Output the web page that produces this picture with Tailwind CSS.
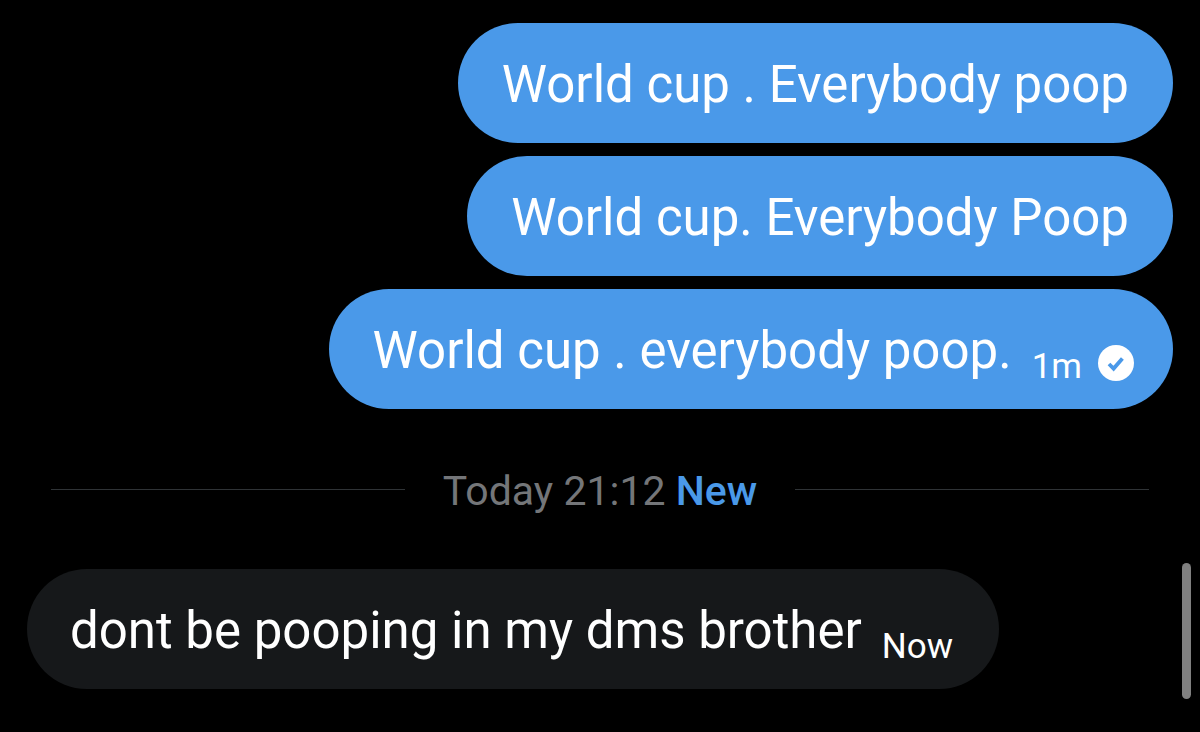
<!DOCTYPE html>
<html lang="en">
<head>
  <meta charset="UTF-8">
  <title>Messages</title>
  <meta name="viewport" content="width=device-width, initial-scale=1">
  <script src="https://cdn.jsdelivr.net/npm/@tailwindcss/browser@4"></script>
</head>
<body class="bg-black min-h-screen text-white font-[Roboto,sans-serif]">
<main class="px-[27px] pt-[23px] pb-10 text-[51px] leading-[60px]">
  <!-- sent -->
  <section class="flex flex-col items-end gap-[13px]">
    <p class="bg-[#4a99e9] rounded-full px-[44px] pt-8 pb-7">World cup . Everybody poop</p>
    <p class="bg-[#4a99e9] rounded-full px-[44px] pt-8 pb-7">World cup. Everybody Poop</p>
    <div class="bg-[#4a99e9] rounded-full pl-[44px] pr-[39px] pt-8 pb-7 flex items-end">
      <p>World cup . everybody poop.</p>
      <time class="ml-5 text-[35px] leading-7">1m</time>
      <svg class="ml-4 w-9 h-9" viewBox="0 0 36 36" role="img" aria-label="Sent">
        <circle cx="18" cy="18" r="18" fill="#fff"/>
        <path d="M11 19l4.6 4.6L24.4 13.4" fill="none" stroke="#4a99e9" stroke-width="3.8"/>
      </svg>
    </div>
  </section>

  <!-- date divider -->
  <div class="flex items-center gap-[38px] px-6 my-[50px]">
    <div class="flex-1 h-px bg-[#2f3336]"></div>
    <p class="pt-[2px] -mb-[2px] text-[41px] text-[#747679]"><time>Today 21:12</time> <span class="font-medium text-[#4a99e9]">New</span></p>
    <div class="flex-1 h-px bg-[#2f3336]"></div>
  </div>

  <!-- received -->
  <section class="flex flex-col items-start">
    <div class="bg-[#16181a] rounded-full pl-[43px] pr-[46px] pt-8 pb-7 flex items-end">
      <p>dont be pooping in my dms brother</p>
      <time class="ml-5 text-[35px] leading-7">Now</time>
    </div>
  </section>
</main>
<!-- scroll thumb -->
<div class="fixed right-[9px] bottom-[33px] w-[9px] h-[136px] rounded-full bg-[#808080]"></div>
</body>
</html>
